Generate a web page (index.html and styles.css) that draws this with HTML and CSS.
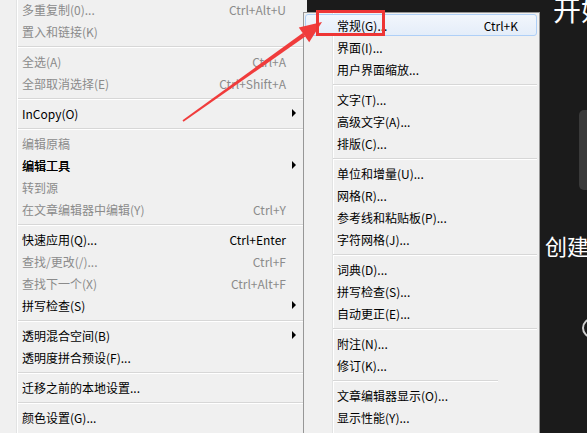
FILE: index.html
```html
<!DOCTYPE html>
<html lang="zh-CN">

<head>
    <meta charset="UTF-8" />
    <meta name="viewport" content="width=device-width, initial-scale=1.0" />
    <title>首选项菜单</title>
    <link rel="stylesheet" href="styles.css">
</head>

<body>
    <div class="screen">
        <!-- Edit menu -->
        <ul class="menu main">
            <li class="item disabled"><span class="label">多重复制(0)...</span><span class="key">Ctrl+Alt+U</span></li>
            <li class="item disabled"><span class="label">置入和链接(K)</span></li>
            <li class="sep"></li>
            <li class="item disabled"><span class="label">全选(A)</span><span class="key">Ctrl+A</span></li>
            <li class="item disabled"><span class="label">全部取消选择(E)</span><span class="key">Ctrl+Shift+A</span></li>
            <li class="sep"></li>
            <li class="item has-sub"><span class="label">InCopy(O)</span><span class="arrow"></span></li>
            <li class="sep"></li>
            <li class="item disabled"><span class="label">编辑原稿</span></li>
            <li class="item has-sub strong"><span class="label">编辑工具</span><span class="arrow"></span></li>
            <li class="item disabled"><span class="label">转到源</span></li>
            <li class="item disabled"><span class="label">在文章编辑器中编辑(Y)</span><span class="key">Ctrl+Y</span></li>
            <li class="sep"></li>
            <li class="item"><span class="label">快速应用(Q)...</span><span class="key">Ctrl+Enter</span></li>
            <li class="item disabled"><span class="label">查找/更改(/)...</span><span class="key">Ctrl+F</span></li>
            <li class="item disabled"><span class="label">查找下一个(X)</span><span class="key">Ctrl+Alt+F</span></li>
            <li class="item has-sub"><span class="label">拼写检查(S)</span><span class="arrow"></span></li>
            <li class="sep"></li>
            <li class="item has-sub"><span class="label">透明混合空间(B)</span><span class="arrow"></span></li>
            <li class="item"><span class="label">透明度拼合预设(F)...</span></li>
            <li class="sep"></li>
            <li class="item"><span class="label">迁移之前的本地设置...</span></li>
            <li class="sep"></li>
            <li class="item"><span class="label">颜色设置(G)...</span></li>
        </ul>

        <!-- Dark application window behind the menus -->
        <div class="app">
            <div class="title">开始</div>
            <div class="panel"></div>
            <div class="create">创建</div>
            <div class="circle"></div>
        </div>

        <!-- Preferences submenu -->
        <ul class="menu submenu">
            <li class="item hot"><span class="label">常规(G)...</span><span class="key">Ctrl+K</span></li>
            <li class="item"><span class="label">界面(I)...</span></li>
            <li class="item"><span class="label">用户界面缩放...</span></li>
            <li class="sep"></li>
            <li class="item"><span class="label">文字(T)...</span></li>
            <li class="item"><span class="label">高级文字(A)...</span></li>
            <li class="item"><span class="label">排版(C)...</span></li>
            <li class="sep"></li>
            <li class="item"><span class="label">单位和增量(U)...</span></li>
            <li class="item"><span class="label">网格(R)...</span></li>
            <li class="item"><span class="label">参考线和粘贴板(P)...</span></li>
            <li class="item"><span class="label">字符网格(J)...</span></li>
            <li class="sep"></li>
            <li class="item"><span class="label">词典(D)...</span></li>
            <li class="item"><span class="label">拼写检查(S)...</span></li>
            <li class="item"><span class="label">自动更正(E)...</span></li>
            <li class="sep"></li>
            <li class="item"><span class="label">附注(N)...</span></li>
            <li class="item"><span class="label">修订(K)...</span></li>
            <li class="sep short"></li>
            <li class="item"><span class="label">文章编辑器显示(O)...</span></li>
            <li class="item"><span class="label">显示性能(Y)...</span></li>
        </ul>

        <!-- Red annotation: arrow and frame -->
        <svg class="annot" width="587" height="433" viewBox="0 0 587 433">
            <polygon points="182.5,120.3 183.5,121.7 305.3,36.6 302.7,33" fill="#f03c3c" />
            <polygon points="322,22 298.8,27.4 309.2,42.2" fill="#f03c3c" />
            <rect x="317.5" y="11.5" width="66" height="23" fill="none" stroke="#ee3535" stroke-width="3" />
        </svg>
    </div>
</body>

</html>
```

FILE: styles.css
```css
body {
    margin: 0;
    background-color: #1b1b1b;
    font-family: "Noto Sans CJK SC", "Noto Sans", sans-serif;
    font-size: 12px;
}

.screen {
    position: relative;
    display: flex;
    height: 433px;
    overflow: hidden;
}

.menu {
    list-style: none;
    margin: 0;
    padding: 0;
    background-color: #f0f0f0;
}

.item {
    display: flex;
    align-items: center;
    box-sizing: border-box;
    height: 22px;
    color: #000;
    white-space: nowrap;
}

.item .label {
    flex: 1;
}

.item.disabled {
    color: #8b8b8b;
}

.item.strong {
    text-shadow: 0.15px 0 0 #000;
}

.arrow {
    width: 0;
    height: 0;
    margin-left: 6px;
    border-left: 4px solid #000;
    border-top: 4px solid transparent;
    border-bottom: 4px solid transparent;
}

.sep {
    height: 0;
    border-top: 1px solid #d7d7d7;
    border-bottom: 1px solid #fff;
}

/* main menu */
.main {
    flex: none;
    width: 307px;
    background-image: linear-gradient(to right, transparent 16px, #e2e3e3 16px, #e2e3e3 17px, #fff 17px, #fff 18px, transparent 18px);
}

.main .item {
    padding: 0 21px 0 22px;
}

.main .item:first-child {
    margin-top: -2px;
}

.main .item.has-sub {
    padding-right: 11px;
}

.main .sep {
    margin: 4px 0 2px 18px;
}

/* submenu */
.submenu {
    position: absolute;
    left: 303px;
    top: 12px;
    bottom: -10px;
    width: 235px;
    padding-top: 1px;
    border: 1px solid #979797;
    background-image: linear-gradient(to right, transparent 28px, #e2e3e3 28px, #e2e3e3 29px, #fff 29px, #fff 30px, transparent 30px);
}

.submenu .item {
    margin: 0 2px 0 1px;
    padding: 0 19px 0 32px;
}

.submenu .item.hot {
    padding: 0 18px 0 31px;
    border: 1px solid #aecff7;
    border-radius: 3px;
    background: linear-gradient(#f2f6fc, #e4edf9);
}

.submenu .sep {
    margin: 4px 2px 2px 29px;
}

.submenu .sep.short {
    margin-right: 41px;
}

/* dark app window */
.app {
    flex: 1;
    display: flex;
    flex-direction: column;
    align-items: flex-start;
    color: #fff;
    white-space: nowrap;
}

.title {
    margin: -7px 0 0 246px;
    font-size: 28px;
    line-height: 32px;
}

.panel {
    width: 20px;
    height: 80px;
    margin: 85px 0 0 272px;
    border-radius: 5px;
    background-color: #3a3a3a;
}

.create {
    margin: 42px 0 0 238px;
    font-size: 22px;
    line-height: 26px;
}

.circle {
    box-sizing: border-box;
    width: 20px;
    height: 20px;
    margin: 60px 0 0 275px;
    border: 2px solid #cfcfcf;
    border-radius: 50%;
}

.annot {
    position: absolute;
    left: 0;
    top: 0;
    pointer-events: none;
}
```
